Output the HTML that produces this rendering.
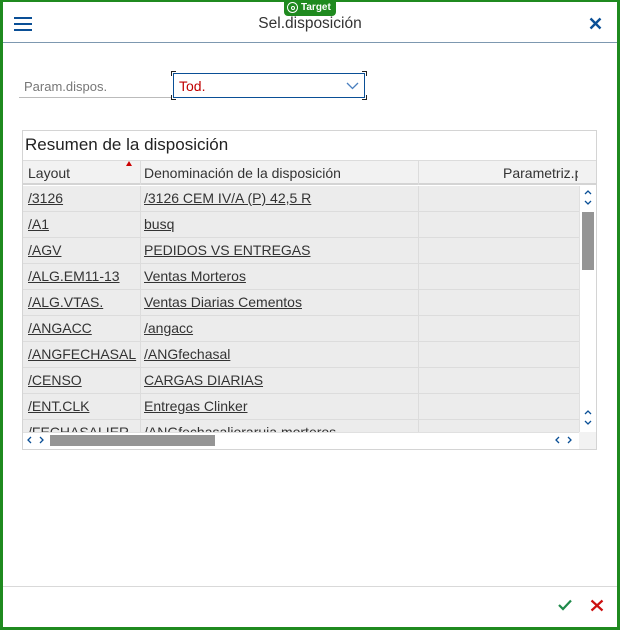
<!DOCTYPE html><html><head><style>
*{margin:0;padding:0;box-sizing:border-box}
body{width:620px;height:630px;background:#fff;position:relative;overflow:hidden;font-family:"Liberation Sans",sans-serif}
.a{position:absolute}
.row{position:absolute;left:23px;width:556px;height:26px;background:#ececec;border-bottom:1px solid #dcdcdc;font-size:14px;color:#333}
.row span{position:absolute;top:4px;text-decoration:underline}
.row .c1{left:5px}.row .c2{left:121px}
.vl{position:absolute;top:0;width:1px;height:26px;background:#dcdcdc}
.tg{left:284px;top:0;width:52px;height:16px;background:#1f8a1f;border-radius:0 0 4px 4px;color:#fff;font-size:10px;font-weight:bold}
</style></head><body>
<div class="a" style="left:0;top:0;width:620px;height:630px;border:3px solid #1f8a1f;border-top-width:2px"></div>
<div class="a" style="left:3px;top:42px;width:614px;height:1px;background:#7d98b0"></div>
<div class="a" style="left:14px;top:17px;width:18px;height:2px;background:#0a4f96"></div>
<div class="a" style="left:14px;top:23px;width:18px;height:2px;background:#0a4f96"></div>
<div class="a" style="left:14px;top:29px;width:18px;height:2px;background:#0a4f96"></div>
<div class="a" style="left:0;width:620px;top:15px;text-align:center;font-size:15.5px;color:#333">Sel.disposición</div>
<svg class="a" style="left:589px;top:17px" width="13" height="13"><path d="M1.5 1.5L11.5 11.5M11.5 1.5L1.5 11.5" stroke="#0a4f96" stroke-width="2.4"/></svg>
<div class="a tg"><span class="a" style="left:3px;top:2px;width:11px;height:11px;border:1.5px solid #fff;border-radius:50%"></span><span class="a" style="left:6.5px;top:5.5px;width:4px;height:4px;border:1px solid #fff;border-radius:50%"></span><span class="a" style="left:17px;top:2px">Target</span></div>
<div class="a" style="left:24px;top:79px;font-size:13px;color:#777">Param.dispos.</div>
<div class="a" style="left:19px;top:97px;width:153px;height:1px;background:#bbb"></div>
<div class="a" style="left:173px;top:73px;width:192px;height:25px;border:1px solid #0a4f96"></div>
<div class="a" style="left:171px;top:71px;width:196px;height:29px;border:1px solid #222;clip-path:polygon(0 0,5px 0,5px 1px,1px 1px,1px 5px,0 5px,0 calc(100% - 5px),1px calc(100% - 5px),1px calc(100% - 1px),5px calc(100% - 1px),5px 100%,0 100%)"></div>
<div class="a" style="left:171px;top:71px;width:196px;height:29px;border:1px solid #222;clip-path:polygon(calc(100% - 5px) 0,100% 0,100% 5px,calc(100% - 1px) 5px,calc(100% - 1px) calc(100% - 5px),100% calc(100% - 5px),100% 100%,calc(100% - 5px) 100%,calc(100% - 5px) calc(100% - 1px),calc(100% - 1px) calc(100% - 1px),calc(100% - 1px) 1px,calc(100% - 5px) 1px)"></div>
<div class="a" style="left:179px;top:78px;font-size:14px;color:#c00000">Tod.</div>
<svg class="a" style="left:346px;top:82px" width="13" height="8"><path d="M1 1L6.5 6.5L12 1" stroke="#4a7fbf" stroke-width="1.3" fill="none"/></svg>
<div class="a" style="left:22px;top:130px;width:575px;height:320px;border:1px solid #d4d4d4"></div>
<div class="a" style="left:25px;top:135px;font-size:17px;color:#222">Resumen de la disposición</div>
<div class="a" style="left:23px;top:160px;width:573px;height:25px;background:#f2f2f2;border-top:1px solid #dcdcdc;border-bottom:2px solid #d4d4d4"></div>
<div class="a" style="left:140px;top:160px;width:1px;height:25px;background:#dcdcdc"></div>
<div class="a" style="left:418px;top:160px;width:1px;height:25px;background:#dcdcdc"></div>
<div class="a" style="left:28px;top:165px;font-size:14px;color:#333">Layout</div>
<div class="a" style="left:126px;top:161px;width:0;height:0;border-left:3px solid transparent;border-right:3px solid transparent;border-bottom:5px solid #c00"></div>
<div class="a" style="left:144px;top:165px;font-size:14px;color:#333">Denominación de la disposición</div>
<div class="a" style="left:503px;top:165px;width:75px;overflow:hidden;white-space:nowrap;font-size:14px;color:#333">Parametriz.p</div>
<div class="a" style="left:23px;top:186px;width:556px;height:246px;overflow:hidden">
<div style="position:relative;left:-23px;top:-186px">
<div class="row" style="top:186px"><div class="vl" style="left:117px"></div><div class="vl" style="left:395px"></div><span class="c1">/3126</span><span class="c2">/3126 CEM IV/A (P) 42,5 R</span></div>
<div class="row" style="top:212px"><div class="vl" style="left:117px"></div><div class="vl" style="left:395px"></div><span class="c1">/A1</span><span class="c2">busq</span></div>
<div class="row" style="top:238px"><div class="vl" style="left:117px"></div><div class="vl" style="left:395px"></div><span class="c1">/AGV</span><span class="c2">PEDIDOS VS ENTREGAS</span></div>
<div class="row" style="top:264px"><div class="vl" style="left:117px"></div><div class="vl" style="left:395px"></div><span class="c1">/ALG.EM11-13</span><span class="c2">Ventas Morteros</span></div>
<div class="row" style="top:290px"><div class="vl" style="left:117px"></div><div class="vl" style="left:395px"></div><span class="c1">/ALG.VTAS.</span><span class="c2">Ventas Diarias Cementos</span></div>
<div class="row" style="top:316px"><div class="vl" style="left:117px"></div><div class="vl" style="left:395px"></div><span class="c1">/ANGACC</span><span class="c2">/angacc</span></div>
<div class="row" style="top:342px"><div class="vl" style="left:117px"></div><div class="vl" style="left:395px"></div><span class="c1">/ANGFECHASAL</span><span class="c2">/ANGfechasal</span></div>
<div class="row" style="top:368px"><div class="vl" style="left:117px"></div><div class="vl" style="left:395px"></div><span class="c1">/CENSO</span><span class="c2">CARGAS DIARIAS</span></div>
<div class="row" style="top:394px"><div class="vl" style="left:117px"></div><div class="vl" style="left:395px"></div><span class="c1">/ENT.CLK</span><span class="c2">Entregas Clinker</span></div>
<div class="row" style="top:420px"><div class="vl" style="left:117px"></div><div class="vl" style="left:395px"></div><span class="c1">/FECHASALIER</span><span class="c2">/ANGfechasalioraruia morteros</span></div>
</div></div>
<div class="a" style="left:579px;top:186px;width:17px;height:246px;background:#fff;border-left:1px solid #e0e0e0"></div>
<div class="a" style="left:582px;top:212px;width:12px;height:58px;background:#959595"></div>
<svg class="a" style="left:583px;top:188px" width="10" height="20"><path d="M2 6L5 3L8 6M2 13L5 16L8 13" stroke="#0a4f96" stroke-width="1.3" fill="none"/></svg>
<svg class="a" style="left:583px;top:408px" width="10" height="20"><path d="M2 6L5 3L8 6M2 13L5 16L8 13" stroke="#0a4f96" stroke-width="1.3" fill="none"/></svg>
<div class="a" style="left:23px;top:432px;width:556px;height:17px;background:#fff;border-top:1px solid #e0e0e0"></div>
<div class="a" style="left:579px;top:432px;width:17px;height:17px;background:#f2f2f2"></div>
<div class="a" style="left:50px;top:435px;width:165px;height:11px;background:#959595"></div>
<svg class="a" style="left:25px;top:435px" width="22" height="10"><path d="M6 2L3 5L6 8M15 2L18 5L15 8" stroke="#0a4f96" stroke-width="1.3" fill="none"/></svg>
<svg class="a" style="left:553px;top:435px" width="22" height="10"><path d="M6 2L3 5L6 8M15 2L18 5L15 8" stroke="#0a4f96" stroke-width="1.3" fill="none"/></svg>
<div class="a" style="left:3px;top:586px;width:614px;height:1px;background:#d9d9d9"></div>
<svg class="a" style="left:558px;top:599px" width="14" height="12"><path d="M1 6L5 10L13 1.5" stroke="#1f8a4a" stroke-width="2.2" fill="none"/></svg>
<svg class="a" style="left:590px;top:599px" width="14" height="13"><path d="M1.5 1.5L12.5 11.5M12.5 1.5L1.5 11.5" stroke="#cc1010" stroke-width="2.2"/></svg>
</body></html>
